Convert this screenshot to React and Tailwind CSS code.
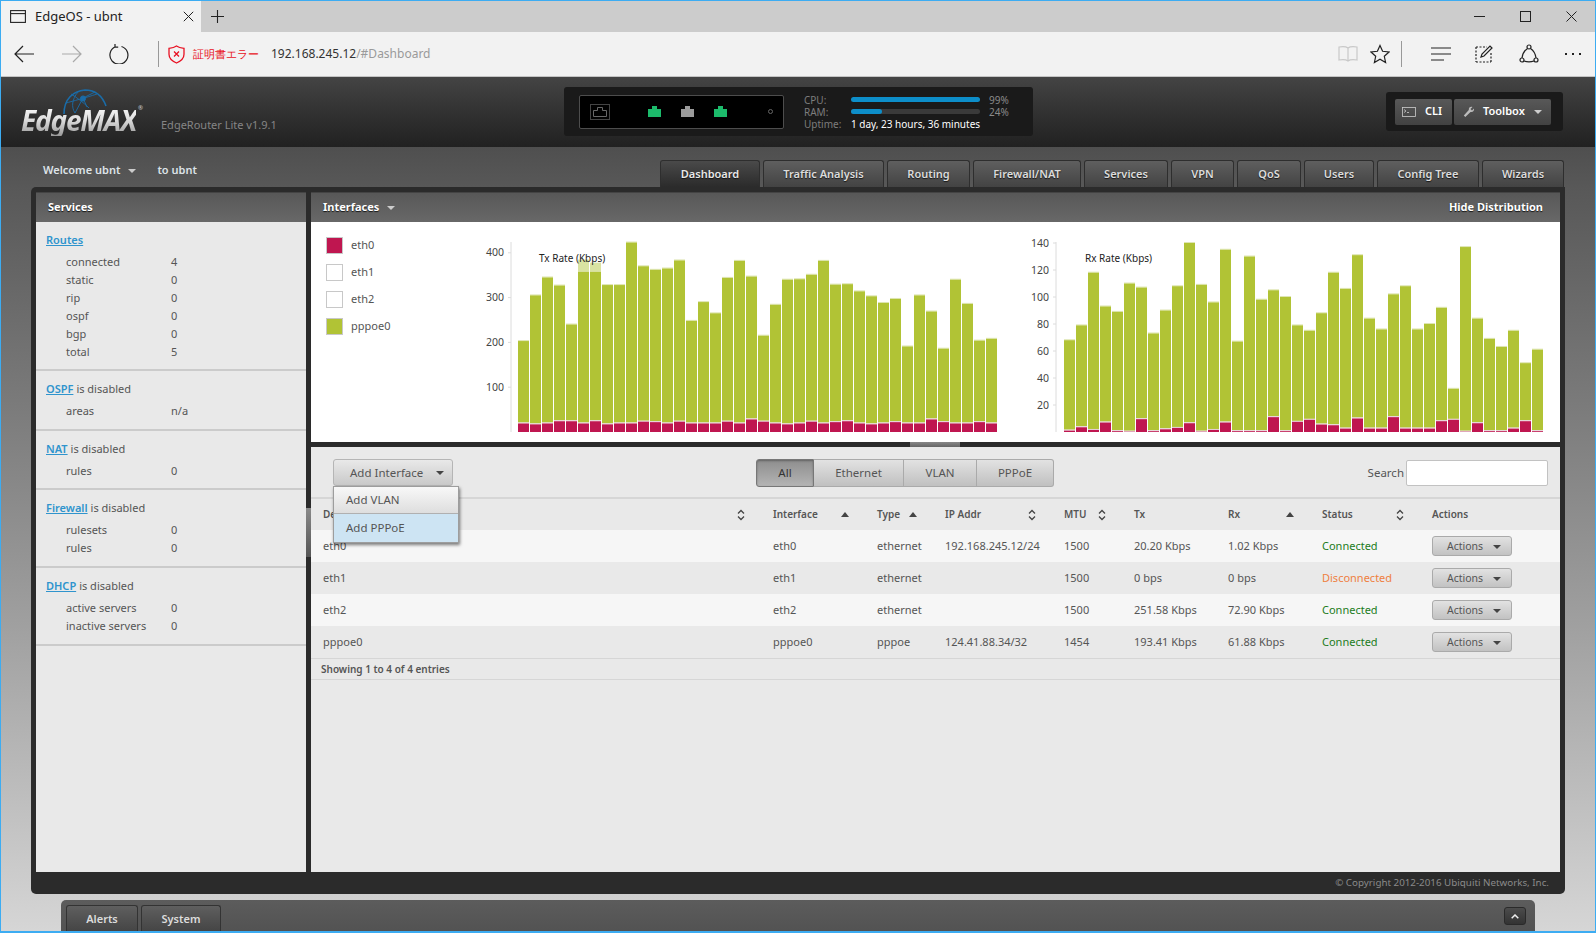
import React from 'react';

const txTotal = [203,305,345,327,240,358,358,328,328,423,370,362,365,383,248,290,265,344,382,347,215,284,340,341,351,382,329,330,314,303,288,297,191,305,269,186,340,286,204,208];
const txEth = [19,17,19,24,24,19,24,17,19,19,23,22,19,23,19,19,19,23,19,28,23,19,17,19,23,19,22,24,19,17,19,22,19,19,28,22,19,19,22,19];
const rxTotal = [68,79,118,93,89,110,107,73,90,108,140,109,96,135,67,130,98,105,100,79,75,88,118,106,131,84,76,102,108,76,80,92,32,137,84,69,63,75,51,61];
const rxEth = [1,3.5,1.5,7,0.6,0.2,9.5,0.6,2,3,6.5,0.2,1.5,7,0.6,0.6,0.6,11,0.6,7.5,9,5.5,5,2.5,10,2.5,2.5,11,2.5,2.5,2.5,8,9,0.2,6.5,0.6,0.6,2.5,8,0.6];

function Chart({ width, axisX, barX, scale, ticks, labelEnd, title, titleX, total, eth, ghost }) {
  const base = 210;
  return (
    <svg width={width} height="220" className="shrink-0">
      <line x1={axisX} x2={axisX} y1="20" y2={base} stroke="#dcdcdc" />
      {ticks.map((t) => (
        <g key={t}>
          <line x1={axisX - 3} x2={axisX} y1={base - t * scale} y2={base - t * scale} stroke="#dcdcdc" />
          <text x={labelEnd} y={base - t * scale + 3.5} textAnchor="end" fontSize="10.5" fill="#444">{t}</text>
        </g>
      ))}
      {total.map((v, i) => {
        const x = barX + i * 12;
        const h = v * scale;
        const e = eth[i] * scale;
        return (
          <g key={i}>
            <rect x={x} y={base - h - 1} width="11" height="1" fill="#dfe6b4" />
            <rect x={x} y={base - h} width="11" height={h - e - 1} fill="#b1c335" />
            <rect x={x} y={base - e - 1} width="11" height="1" fill="#e6d0d8" />
            <rect x={x} y={base - e} width="11" height={e} fill="#bf1650" />
          </g>
        );
      })}
      {ghost && ghost.map((g) => (
        <rect key={g.i} x={barX + g.i * 12} y={base - g.v * scale} width="11" height={(g.v - total[g.i]) * scale} fill="#d9e3a2" />
      ))}
      <text x={titleX} y="39.5" fontSize="10" fill="#222">{title}</text>
    </svg>
  );
}

const Caret = ({ className }) => (
  <svg width="8" height="4" viewBox="0 0 8 4" className={className}><path d="M0 0h8L4 4z" fill="currentColor" /></svg>
);
const SortUp = () => (
  <svg width="8" height="5" viewBox="0 0 8 5" className="shrink-0"><path d="M4 0l4 5H0z" fill="#444" /></svg>
);
const SortBoth = () => (
  <svg width="8" height="12" viewBox="0 0 8 12" fill="none" stroke="#444" strokeWidth="1.3" className="shrink-0"><path d="M1 4.5L4 1.5l3 3M1 7.5l3 3 3-3" /></svg>
);

function NavTab({ label, w, active }) {
  return (
    <div className={`${w} h-[27px] flex items-center justify-center rounded-t-[3px] border border-b-0 border-[#2e2e2e] text-[11px] font-semibold [text-shadow:0_1px_1px_rgba(0,0,0,.7)] ${active ? 'bg-gradient-to-b from-[#4a4a4a] to-[#2b2b2b] text-[#e8e8e8]' : 'bg-gradient-to-b from-[#5f5f5f] to-[#434343] text-[#dcdcdc]'}`}>
      {label}
    </div>
  );
}

function PanelHead({ children }) {
  return (
    <div className="h-[30px] shrink-0 flex items-center justify-between bg-gradient-to-b from-[#585858] to-[#686868] border-t border-[#444] text-white font-bold text-[11px] [text-shadow:0_1px_1px_rgba(0,0,0,.8)]">
      {children}
    </div>
  );
}

function Section({ link, suffix, rows, pad }) {
  return (
    <div className={`pt-2 ${pad} border-b-2 border-[#cbcbcb] pl-[10px]`}>
      <div className="h-5 flex items-center text-[11px] text-[#555]">
        <span className="text-[#2f94cd] font-semibold underline">{link}</span>
        {suffix && <span className="ml-[3px]">{suffix}</span>}
      </div>
      <div className="mt-[3px]">
        {rows.map(([k, v]) => (
          <div key={k} className="h-[18px] flex items-center text-[11px] text-[#555]">
            <span className="w-[125px] pl-[20px]">{k}</span>
            <span>{v}</span>
          </div>
        ))}
      </div>
    </div>
  );
}

const Port = ({ color }) => (
  <svg width="13" height="11" viewBox="0 0 13 11"><path d="M0 3h4V0h5v3h4v8H0z" fill={color} /></svg>
);

const gridCols = 'grid grid-cols-[450px_104px_68px_119px_70px_94px_94px_110px_1fr] pl-[12px]';
const data = [
  ['eth0', 'eth0', 'ethernet', '192.168.245.12/24', '1500', '20.20 Kbps', '1.02 Kbps', 'Connected'],
  ['eth1', 'eth1', 'ethernet', '', '1500', '0 bps', '0 bps', 'Disconnected'],
  ['eth2', 'eth2', 'ethernet', '', '1500', '251.58 Kbps', '72.90 Kbps', 'Connected'],
  ['pppoe0', 'pppoe0', 'pppoe', '124.41.88.34/32', '1454', '193.41 Kbps', '61.88 Kbps', 'Connected'],
];

const HeadCell = ({ label, icon }) => (
  <div className="flex items-center justify-between pr-[28px]">
    <span>{label}</span>
    {icon}
  </div>
);

const Icon = ({ w = 20, h = 20, vb = '0 0 20 20', children, stroke = '#222', sw = 1.2, className }) => (
  <svg width={w} height={h} viewBox={vb} fill="none" stroke={stroke} strokeWidth={sw} className={className}>{children}</svg>
);

export default function App() {
  return (
    <div className="w-[1596px] h-[933px] overflow-hidden flex flex-col border border-b-2 border-[#3cacf2] font-['Open_Sans','Noto_Sans_CJK_JP',sans-serif]">
      {/* browser tab strip */}
      <div className="h-[31px] shrink-0 flex items-center bg-[#cccccc]">
        <div className="w-[200px] h-full bg-[#f2f2f2] flex items-center pl-[9px]">
          <Icon w={16} h={13} vb="0 0 16 13" sw={1.1}><rect x=".6" y=".6" width="14.8" height="11.8" /><path d="M.6 3.6h14.8" /></Icon>
          <span className="ml-[9px] text-[13px] text-[#222]">EdgeOS - ubnt</span>
          <Icon w={11} h={11} vb="0 0 11 11" sw={1} className="ml-[60px]"><path d="M.8.8l9.4 9.4M10.2.8L.8 10.2" /></Icon>
        </div>
        <Icon w={13} h={13} vb="0 0 13 13" sw={1.1} className="ml-[10px]"><path d="M6.5 0v13M0 6.5h13" /></Icon>
        <div className="flex-1" />
        <Icon w={11} h={11} vb="0 0 11 11" sw={1} className="mr-[35px]"><path d="M0 5.5h11" /></Icon>
        <Icon w={11} h={11} vb="0 0 11 11" sw={1} className="mr-[35px]"><rect x=".5" y=".5" width="10" height="10" /></Icon>
        <Icon w={11} h={11} vb="0 0 11 11" sw={1} className="mr-[18px]"><path d="M.5.5l10 10M10.5.5l-10 10" /></Icon>
      </div>
      {/* browser toolbar */}
      <div className="h-[44px] shrink-0 bg-[#f2f2f2] flex items-center pl-[13px] border-b border-[#c4c4c4] box-content">
        <Icon w={20} h={18} vb="0 0 20 18"><path d="M20 9H1M9 1L1 9l8 8" /></Icon>
        <Icon w={20} h={18} vb="0 0 20 18" stroke="#aaa" className="ml-[28px]"><path d="M0 9h19M11 1l8 8-8 8" /></Icon>
        <Icon w={20} h={20} vb="0 0 20 20" className="ml-[27px]"><path d="M6.500 2.800a9 9 0 1 0 6-.3M6 0v3.200h3.200" /></Icon>
        <div className="w-px h-[26px] bg-[#999] ml-[29px]" />
        <Icon w={17} h={19} vb="0 0 17 19" stroke="#e81123" sw={1.3} className="ml-[9px]"><path d="M8.5 1C11 2.8 13 3 16 3.3v6c0 4-3.5 7-7.5 8.7C4.500 16.300 1 13.300 1 9.300v-6C4 3 6 2.800 8.500 1z" /><path d="M6 6.500l5 5M11 6.500l-5 5" /></Icon>
        <span className="ml-[8px] text-[11px] text-[#e81123] w-[78px] whitespace-nowrap">証明書エラー</span>
        <span className="text-[12px] text-[#333]">192.168.245.12</span>
        <span className="text-[12px] text-[#9a9a9a]">/#Dashboard</span>
        <div className="flex-1" />
        <Icon w={20} h={18} vb="0 0 20 18" stroke="#c8c8c8" className="mr-[12px]"><path d="M10 3C8 1.500 4 1.500 1 2v13c3-.5 7-.5 9 1 2-1.500 6-1.500 9-1V2c-3-.5-7-.5-9 1zM10 3v13" /></Icon>
        <Icon w={20} h={20} vb="0 0 20 20" className="mr-[11px]"><path d="M10 1.500l2.600 5.800 6.400.7-4.700 4.300 1.300 6.200-5.600-3.200-5.600 3.200 1.300-6.200L1 8l6.400-.7z" /></Icon>
        <div className="w-px h-[26px] bg-[#999] mr-[29px]" />
        <Icon w={20} h={14} vb="0 0 20 14" className="mr-[23px]"><path d="M0 1h20M0 7h20M0 13h13" /></Icon>
        <Icon w={19} h={19} vb="0 0 19 19" className="mr-[26px]"><path d="M2 2h11M2 17h15M2 2v15M17 8v9" strokeDasharray="2 1.500" /><path d="M7 12l1-3 8-8 2 2-8 8z" /></Icon>
        <Icon w={20} h={20} vb="0 0 20 20" className="mr-[26px]"><circle cx="10" cy="3" r="2" /><circle cx="3" cy="16" r="2" /><circle cx="17" cy="16" r="2" /><path d="M8.500 4.500C5.500 6.500 3.500 10 3 14M11.500 4.500c3 2 5 5.500 5.500 9.500M5 17c3 1 7 1 10 0" /></Icon>
        <div className="flex gap-[5px] mr-[14px]">
          <div className="w-[2px] h-[2px] bg-[#222]" /><div className="w-[2px] h-[2px] bg-[#222]" /><div className="w-[2px] h-[2px] bg-[#222]" />
        </div>
      </div>

      {/* EdgeOS header */}
      <div className="h-[70px] shrink-0 bg-gradient-to-b from-[#444444] to-[#212121] flex items-start">
        <div className="relative w-[140px] h-full ml-[20px] shrink-0">
          <svg width="46" height="26" viewBox="0 0 46 26" fill="none" stroke="#1a6ca8" strokeWidth=".9" className="absolute left-[40px] top-[12px]">
            <path d="M3 25C3 10 12 2 24 1c9 0 17 5 21 16" strokeWidth="1.600" />
            <path d="M5 14C12 12 24 9 36 5M10 5c5 3 12 8 18 14M22 9l-8 15M22 9l12-6M22 9l4 9M14 24c-4-6-3-14 3-21" />
            <circle cx="22" cy="9.500" r="2.600" fill="#1a6ca8" />
          </svg>
          <div className="absolute left-0 top-[27px] text-[28px] leading-[32px] font-bold italic font-['Liberation_Sans',sans-serif] tracking-[-1.200px] bg-gradient-to-b from-[#ffffff] via-[#dddddd] to-[#999999] bg-clip-text text-transparent whitespace-nowrap">
            EdgeMAX
          </div>
          <span className="absolute left-[117px] top-[27px] text-[6px] text-[#ccc]">®</span>
        </div>
        <span className="mt-[40px] text-[11px] text-[#858585] w-[403px] whitespace-nowrap">EdgeRouter Lite v1.9.1</span>
        <div className="mt-[10px] w-[469px] h-[49px] shrink-0 rounded-[3px] bg-[#1a1a1a] flex items-center pl-[15px]">
          <div className="w-[205px] h-[34px] shrink-0 bg-black border border-[#4d4d4d] rounded-[2px] flex items-center pl-[10px]">
            <div className="w-[20px] h-[16px] border border-[#444] flex items-center justify-center">
              <svg width="14" height="10" viewBox="0 0 14 10" fill="none" stroke="#666"><path d="M.5 9.500v-6h4v-3h5v3h4v6z" /></svg>
            </div>
            <div className="ml-[38px] flex gap-[20px]">
              <Port color="#1cbb6b" /><Port color="#9b9b9b" /><Port color="#1cbb6b" />
            </div>
            <div className="ml-[41px] w-[5px] h-[5px] rounded-full border border-[#666]" />
          </div>
          <div className="ml-[20px] w-[225px] shrink-0 text-[10px] leading-[12px] text-[#7d7d7d]">
            <div className="flex items-center h-[12px]">
              <span className="w-[47px]">CPU:</span>
              <div className="w-[129px] h-[5px] rounded-full bg-[#0d8ec9]" />
              <span className="ml-[9px] text-[#8a8a8a]">99%</span>
            </div>
            <div className="flex items-center h-[12px]">
              <span className="w-[47px]">RAM:</span>
              <div className="w-[129px] h-[5px] rounded-full bg-[#3a3a3a]">
                <div className="w-[31px] h-full rounded-full bg-[#0d8ec9]" />
              </div>
              <span className="ml-[9px] text-[#8a8a8a]">24%</span>
            </div>
            <div className="flex items-center h-[12px]">
              <span className="w-[47px]">Uptime:</span>
              <span className="text-white whitespace-nowrap">1 day, 23 hours, 36 minutes</span>
            </div>
          </div>
        </div>
        <div className="ml-[353px] mt-[15px] w-[177px] h-[39px] shrink-0 rounded-[3px] bg-[#1a1a1a] flex items-center pl-[9px] gap-[2px] text-[11px] font-semibold text-white">
          <div className="w-[57px] h-[26px] rounded-[2px] bg-gradient-to-b from-[#585858] to-[#424242] flex items-center pl-[7px]">
            <svg width="14" height="10" viewBox="0 0 14 10" fill="none" stroke="#ccc" strokeWidth=".8"><rect x=".5" y=".5" width="13" height="9" /><path d="M2 2.500l2 1.500-2 1.500M5 5.500h2" /></svg>
            <span className="ml-[9px]">CLI</span>
          </div>
          <div className="w-[97px] h-[26px] rounded-[2px] bg-gradient-to-b from-[#585858] to-[#424242] flex items-center pl-[9px]">
            <svg width="12" height="12" viewBox="0 0 12 12"><path d="M11 2.500L9 4.500 7.500 3 9.500 1C7.500 .2 5.500 1.500 5.800 4L.8 9.500l1.500 1.500L7.500 6c2.500.5 4-1.500 3.500-3.500z" fill="#bbb" /></svg>
            <span className="ml-[8px]">Toolbox</span>
            <Caret className="ml-[9px] text-[#ccc]" />
          </div>
        </div>
      </div>

      {/* welcome + nav tabs */}
      <div className="h-[40px] shrink-0 flex items-end justify-between pl-[42px] pr-[31px] bg-gradient-to-b from-[#4f4f4f] to-[#585858]">
        <div className="flex items-center h-[40px] pt-[7px] text-[11px] font-semibold text-[#dde3e8]">
          <span>Welcome ubnt</span>
          <Caret className="ml-[8px] text-[#ccc]" />
          <span className="ml-[21px]">to ubnt</span>
        </div>
        <div className="flex gap-[3px]">
          <NavTab label="Dashboard" w="w-[100px]" active />
          <NavTab label="Traffic Analysis" w="w-[121px]" />
          <NavTab label="Routing" w="w-[83px]" />
          <NavTab label="Firewall/NAT" w="w-[108px]" />
          <NavTab label="Services" w="w-[84px]" />
          <NavTab label="VPN" w="w-[63px]" />
          <NavTab label="QoS" w="w-[64px]" />
          <NavTab label="Users" w="w-[70px]" />
          <NavTab label="Config Tree" w="w-[102px]" />
          <NavTab label="Wizards" w="w-[82px]" />
        </div>
      </div>

      {/* main body */}
      <div className="flex-1 min-h-0 flex flex-col bg-gradient-to-b from-[#585858] to-[#d6d6d6]">
        <div className="ml-[30px] w-[1534px] h-[707px] shrink-0 bg-[#2b2b2b] rounded-[5px] rounded-tr-none flex flex-col px-[5px] pt-[5px]">
          <div className="flex-1 min-h-0 flex">
            {/* left */}
            <div className="w-[270px] shrink-0 flex flex-col bg-[#e9e9e9]">
              <PanelHead><span className="pl-[12px]">Services</span></PanelHead>
              <Section link="Routes" pad="pb-2" rows={[['connected','4'],['static','0'],['rip','0'],['ospf','0'],['bgp','0'],['total','5']]} />
              <Section link="OSPF" suffix="is disabled" pad="pb-[9px]" rows={[['areas','n/a']]} />
              <Section link="NAT" suffix="is disabled" pad="pb-2" rows={[['rules','0']]} />
              <Section link="Firewall" suffix="is disabled" pad="pb-[9px]" rows={[['rulesets','0'],['rules','0']]} />
              <Section link="DHCP" suffix="is disabled" pad="pb-[9px]" rows={[['active servers','0'],['inactive servers','0']]} />
            </div>
            {/* splitter */}
            <div className="w-[5px] shrink-0 flex flex-col">
              <div className="h-[316px]" />
              <div className="h-[49px] bg-gradient-to-b from-[#8a8a8a] to-[#555]" />
            </div>
            {/* right */}
            <div className="flex-1 min-w-0 flex flex-col">
              <PanelHead>
                <div className="flex items-center pl-[12px]">Interfaces<Caret className="ml-[8px] text-[#ccc]" /></div>
                <span className="pr-[17px]">Hide Distribution</span>
              </PanelHead>
              <div className="h-[220px] shrink-0 bg-white flex">
                <div className="w-[159px] shrink-0 pl-[15px] pt-[15px] flex flex-col gap-[10px] text-[11px] text-[#555]">
                  {[['eth0','bg-[#bf1650]'],['eth1','bg-white'],['eth2','bg-white'],['pppoe0','bg-[#b1c335]']].map(([n,c]) => (
                    <div key={n} className="h-[17px] flex items-center">
                      <div className={`w-[17px] h-[17px] border border-[#c8c8c8] ${c}`} />
                      <span className="ml-[8px]">{n}</span>
                    </div>
                  ))}
                </div>
                <Chart width={550} axisX={41} barX={48} scale={0.448} ticks={[100,200,300,400]} labelEnd={34} title="Tx Rate (Kbps)" titleX={69} total={txTotal} eth={txEth} ghost={[{i:5,v:385},{i:6,v:378}]} />
                <Chart width={540} axisX={36} barX={44} scale={1.35} ticks={[20,40,60,80,100,120,140]} labelEnd={29} title="Rx Rate (Kbps)" titleX={65} total={rxTotal} eth={rxEth} />
              </div>
              <div className="h-[5px] shrink-0 flex">
                <div className="ml-[599px] w-[50px] h-full bg-gradient-to-b from-[#888] to-[#666]" />
              </div>
              {/* interfaces table */}
              <div className="flex-1 min-h-0 bg-[#e9e9e9] text-[11.500px] text-[#555]">
                <div className="h-[52px] relative border-b-2 border-[#d6d6d6] flex items-start pt-[12px] pl-[22px] pr-[12px]">
                  <div className="relative w-[120px] h-[27px] shrink-0 rounded-[3px] border border-[#b5b5b5] bg-gradient-to-b from-[#e9e9e9] to-[#c9c9c9] flex items-center pl-[16px]">
                    Add Interface
                    <Caret className="ml-[13px] text-[#444]" />
                    <div className="absolute left-[-1px] top-[26px] z-10 w-[126px] h-[57px] bg-white border border-[#9d9d9d] shadow-[1px_2px_3px_rgba(0,0,0,.5)] flex flex-col">
                      <div className="h-[27px] shrink-0 flex items-center pl-[12px] bg-gradient-to-b from-[#f8f8f8] to-[#dedede] border-b border-[#b0b0b0]">Add VLAN</div>
                      <div className="flex-1 flex items-center pl-[12px] bg-[#cde4f3]">Add PPPoE</div>
                    </div>
                  </div>
                  <div className="ml-[303px] flex h-[28px] shrink-0">
                    <div className="w-[58px] flex items-center justify-center rounded-l-[3px] border border-[#777] bg-gradient-to-b from-[#8e8e8e] to-[#b4b4b4] shadow-[inset_0_1px_2px_rgba(0,0,0,.3)] text-[#333]">All</div>
                    <div className="w-[90px] flex items-center justify-center border border-l-0 border-[#aaa] bg-gradient-to-b from-[#e2e2e2] to-[#c0c0c0]">Ethernet</div>
                    <div className="w-[73px] flex items-center justify-center border border-l-0 border-[#aaa] bg-gradient-to-b from-[#e2e2e2] to-[#c0c0c0]">VLAN</div>
                    <div className="w-[77px] flex items-center justify-center rounded-r-[3px] border border-l-0 border-[#aaa] bg-gradient-to-b from-[#e2e2e2] to-[#c0c0c0]">PPPoE</div>
                  </div>
                  <div className="flex-1" />
                  <div className="flex items-center h-[27px]">
                    <span>Search</span>
                    <div className="ml-[2px] w-[142px] h-[26px] bg-white border border-[#c2c2c2] rounded-[2px]" />
                  </div>
                </div>
                <div className={`${gridCols} h-[31px] items-center font-semibold text-[10px]`}>
                  <HeadCell label="Device" icon={<SortBoth />} />
                  <HeadCell label="Interface" icon={<SortUp />} />
                  <HeadCell label="Type" icon={<SortUp />} />
                  <HeadCell label="IP Addr" icon={<SortBoth />} />
                  <HeadCell label="MTU" icon={<SortBoth />} />
                  <div>Tx</div>
                  <HeadCell label="Rx" icon={<SortUp />} />
                  <HeadCell label="Status" icon={<SortBoth />} />
                  <div>Actions</div>
                </div>
                {data.map((r, i) => (
                  <div key={r[0]} className={`${gridCols} h-[32px] items-center text-[11px] ${i % 2 === 0 ? 'bg-[#f6f6f6]' : 'bg-[#e9e9e9]'}`}>
                    {r.slice(0, 7).map((c, j) => <div key={j}>{c}</div>)}
                    <div className={r[7] === 'Connected' ? 'text-[#1c7c1c]' : 'text-[#ef7f3f]'}>{r[7]}</div>
                    <div className="w-[80px] h-[20px] rounded-[3px] border border-[#aaa] bg-gradient-to-b from-[#e2e2e2] to-[#c2c2c2] flex items-center pl-[14px] pt-px text-[10.500px]">
                      Actions<Caret className="ml-[10px] text-[#444]" />
                    </div>
                  </div>
                ))}
                <div className="h-[20px] border-y border-[#d6d6d6] box-content flex items-center pl-[10px] text-[10px] font-semibold">Showing 1 to 4 of 4 entries</div>
              </div>
            </div>
          </div>
          <div className="h-[22px] shrink-0 flex items-center justify-end pr-[11px] text-[9.800px] text-[#8a8a8a]">© Copyright 2012-2016 Ubiquiti Networks, Inc.</div>
        </div>
        <div className="ml-[60px] mt-[6px] w-[1474px] flex-1 rounded-t-[5px] bg-gradient-to-b from-[#5c5c5c] to-[#525252] flex items-start pl-[5px] pt-[5px]">
          <div className="w-[72px] h-[28px] flex items-center justify-center rounded-t-[3px] border border-b-0 border-[#333] bg-gradient-to-b from-[#5f5f5f] to-[#434343] text-[#dcdcdc] text-[11px] font-semibold">Alerts</div>
          <div className="ml-[3px] w-[80px] h-[28px] flex items-center justify-center rounded-t-[3px] border border-b-0 border-[#333] bg-gradient-to-b from-[#5f5f5f] to-[#434343] text-[#dcdcdc] text-[11px] font-semibold">System</div>
          <div className="flex-1" />
          <div className="mt-[2px] mr-[9px] w-[22px] h-[18px] rounded-[3px] border border-[#2a2a2a] bg-gradient-to-b from-[#4c4c4c] to-[#333] flex items-center justify-center">
            <svg width="8" height="5" viewBox="0 0 8 5" fill="none" stroke="#eee" strokeWidth="1.500"><path d="M.7 4.300L4 1l3.300 3.300" /></svg>
          </div>
        </div>
      </div>
    </div>
  );
}
